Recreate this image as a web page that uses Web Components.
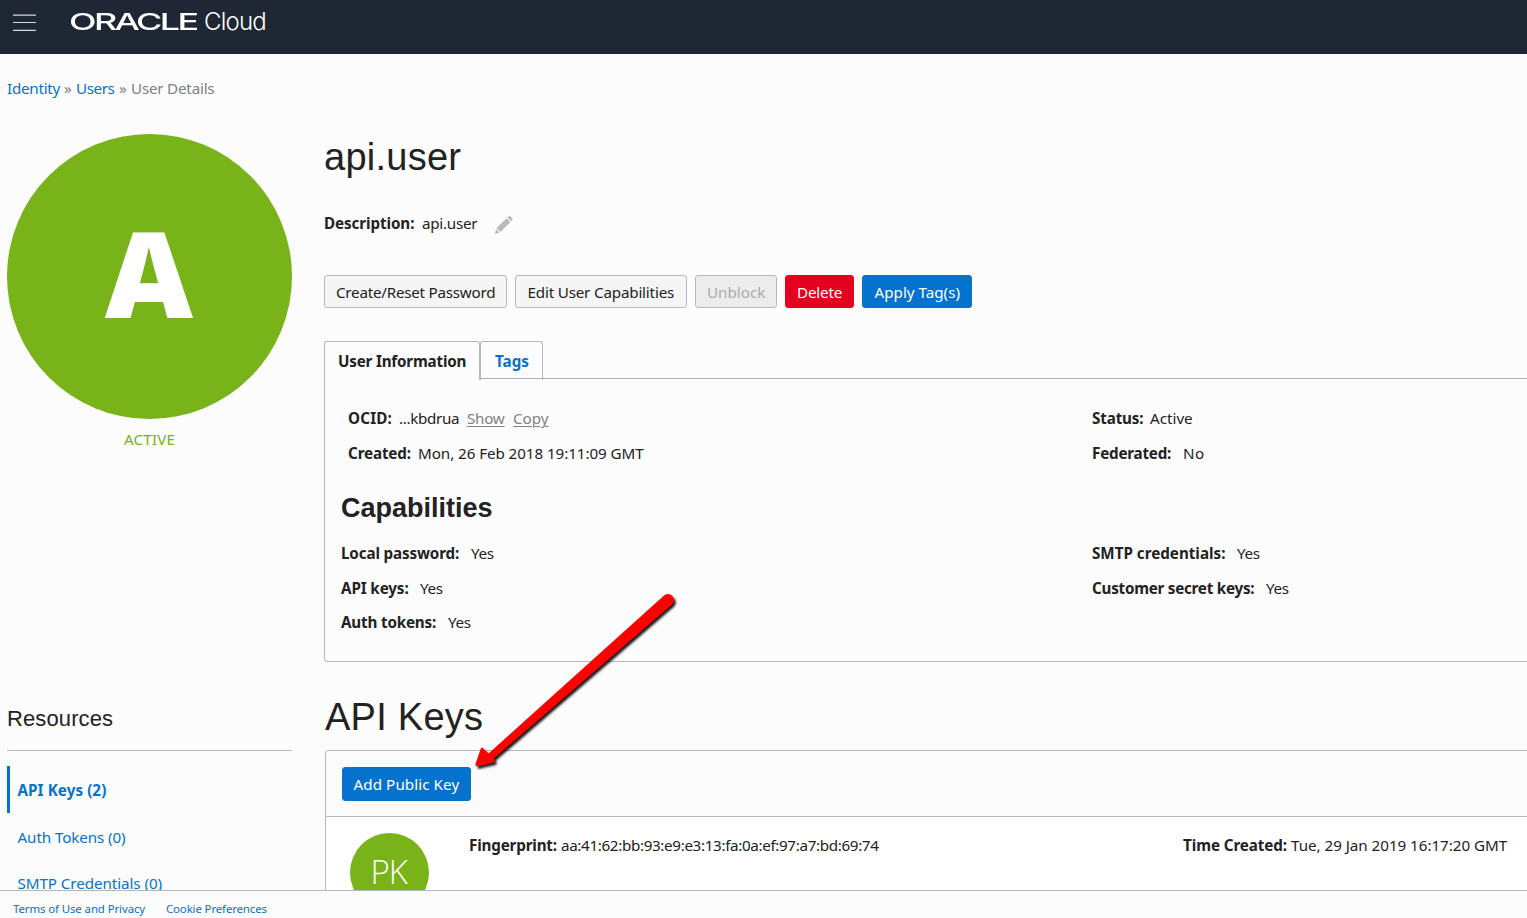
<!DOCTYPE html>
<html lang="en">
<head>
<meta charset="utf-8">
<title>User Details</title>
<style>
html,body{margin:0;height:100%;overflow:hidden;background:#fcfcfc}
body{font:15.2px/20px "Noto Sans","Open Sans",sans-serif;color:#222}
</style>
</head>
<body>
<console-app></console-app>
<script>
class Base extends HTMLElement{
  connectedCallback(){
    if(this.shadowRoot)return;
    const root=this.attachShadow({mode:'open'});
    const t=document.createElement('template');
    t.innerHTML=this.render();
    root.appendChild(t.content.cloneNode(true));
  }
  attr(n,d=''){return this.getAttribute(n)??d}
}

/* Product bar */
class ConsoleHeader extends Base{
  render(){return `<style>
:host{display:flex;height:54px;flex:none;background:#1e2733;color:#fff;box-sizing:border-box;padding-left:13px}
.menu{margin-top:14px;width:23px;height:18px;flex:none;display:block}
.brand{display:flex;align-items:flex-start;margin:8px 0 0 33px;height:28px;line-height:28px}
.word{width:128px;margin-right:7px;flex:none}
.word ui-text{font:500 23px/28px "Inter",sans-serif;transform-origin:0 0;transform:scaleX(1.56)}
.cloud{font:300 24px/28px "Inter",sans-serif}
</style>
<svg class="menu" viewBox="0 0 23 18"><path d="M0 1.2H23M0 8.5H23M0 16.3H23" stroke="#d7d9dc" stroke-width="1.2"/></svg>
<div class="brand"><span class="word"><ui-text w="82">ORACLE</ui-text></span><ui-text class="cloud" w="62">Cloud</ui-text></div>`}
}

/* Trail of links above the page title */
class BreadCrumb extends Base{
  render(){return `<style>
:host{display:flex;height:20px;gap:4px;color:#7d7f82}
.l{color:#0572ce}
</style><ui-text class="l" w="53">Identity</ui-text><ui-text w="8">»</ui-text><ui-text class="l" w="39">Users</ui-text><ui-text w="8">»</ui-text><ui-text w="83.5">User Details</ui-text>`}
}

class UiButton extends Base{
  render(){return `<style>
:host{display:flex;align-items:center;justify-content:center;box-sizing:border-box;height:33px;border:1px solid #b3b9c3;border-radius:3px;background:#f5f5f5;flex:none;width:${this.attr('width')}px}
:host([kind=disabled]){background:#ececec;color:#a9abae}
:host([kind=danger]){background:#e6001f;border-color:#e6001f;color:#fff}
:host([kind=primary]){background:#0572ce;border-color:#0572ce;color:#fff}
</style><slot></slot>`}
}

/* Label and value pair */
class UiField extends Base{
  render(){return `<style>
:host{display:flex;height:20px;white-space:nowrap}
.k{font-weight:700;margin-right:${this.attr('gap','8')}px}
</style><ui-text class="k" w="${this.attr('kw')}">${this.attr('label')}</ui-text><ui-text w="${this.attr('vw')}">${this.attr('value')}</ui-text><slot></slot>`}
}

class UiAvatar extends Base{
  render(){const s=this.attr('size');return `<style>
:host{display:flex;align-items:center;justify-content:center;flex:none;width:${s}px;height:${s}px;border-radius:50%;background:#78b319;color:#fff}
</style><slot></slot>`}
}

class UserTabs extends Base{
  render(){return `<style>
:host{display:flex;height:37px;flex:none}
div{box-sizing:border-box;border:1px solid #b3b9c3;border-bottom:0;border-radius:3px 3px 0 0;font-weight:700;height:39px;padding:9px 0 0 13px;position:relative;z-index:1}
.on{width:156px;background:#fcfcfc}
.off{width:63px;padding-left:14px;color:#0572ce}
</style><div class="on"><ui-text w="128">User Information</ui-text></div><div class="off"><ui-text w="34">Tags</ui-text></div>`}
}

class UserInfo extends Base{
  render(){return `<style>
:host{display:block;box-sizing:border-box;height:284px;flex:none;border:1px solid #b3b9c3;border-top-color:#aab0b5;border-right:0;border-radius:0 0 0 4px;padding:29px 0 0 16px}
.grid{display:grid;grid-template-columns:751px 1fr;row-gap:15px}
.top ui-field:nth-child(odd){margin-left:7px}
.caps{row-gap:14.5px}
h2{font:700 27px/34px "Liberation Sans",sans-serif;margin:28px 0 18px;height:34px}
.link{color:#7f8285;margin-left:8px;text-decoration:underline 1px;text-underline-offset:2px}
</style>
<div class="grid top">
<ui-field label="OCID:" kw="44" value="...kbdrua" vw="60" gap="7"><ui-text class="link" w="38">Show</ui-text><ui-text class="link" w="36">Copy</ui-text></ui-field>
<ui-field label="Status:" kw="51" value="Active" vw="43" gap="7"></ui-field>
<ui-field label="Created:" kw="63" value="Mon, 26 Feb 2018 19:11:09 GMT" vw="226" gap="7"></ui-field>
<ui-field label="Federated:" kw="79" value="No" vw="22" gap="12"></ui-field>
</div>
<h2><ui-text w="152">Capabilities</ui-text></h2>
<div class="grid caps">
<ui-field label="Local password:" kw="118" value="Yes" vw="23" gap="12"></ui-field>
<ui-field label="SMTP credentials:" kw="133" value="Yes" vw="23" gap="12"></ui-field>
<ui-field label="API keys:" kw="68" value="Yes" vw="23" gap="11"></ui-field>
<ui-field label="Customer secret keys:" kw="162" value="Yes" vw="23" gap="12"></ui-field>
<ui-field label="Auth tokens:" kw="95" value="Yes" vw="23" gap="12"></ui-field>
</div>`}
}

class ApiKeys extends Base{
  render(){return `<style>
:host{display:block;margin-left:1px;border:1px solid #b3b9c3;border-right:0;border-radius:4px 0 0 0;height:200px;box-sizing:border-box}
.bar{box-sizing:border-box;padding:16px;border-bottom:1px solid #b3b9c3;height:66px;background:#fbfbfb;border-radius:3px 0 0 0}
.row{display:flex;background:#fff;height:133px;padding:16px 0 0 24px;box-sizing:border-box}
.pk{font:300 33px/40px "Open Sans",sans-serif;margin:-2px 2px 0 0}
.fp{margin:2px 0 0 40px;width:714px;flex:none}
.tc{margin-top:2px}
</style>
<div class="bar"><ui-button kind="primary" width="129" style="height:34px"><ui-text w="106">Add Public Key</ui-text></ui-button></div>
<div class="row"><ui-avatar size="79"><ui-text class="pk" w="36">PK</ui-text></ui-avatar>
<ui-field class="fp" label="Fingerprint:" kw="88" value="aa:41:62:bb:93:e9:e3:13:fa:0a:ef:97:a7:bd:69:74" vw="318" gap="4"></ui-field>
<ui-field class="tc" label="Time Created:" kw="104" value="Tue, 29 Jan 2019 16:17:20 GMT" vw="216" gap="4"></ui-field></div>`}
}

class SideBar extends Base{
  render(){return `<style>
:host{display:flex;flex-direction:column;width:285px;flex:none}
.a{font:800 118px/160px "Open Sans",sans-serif;margin:-8px 2px 0 0;transform:scaleX(1.03)}
.st{color:#78b319;align-self:center;margin-top:10px}
h3{font:400 22px/28px "Liberation Sans",sans-serif;margin:256px 0 0;height:46px;box-sizing:border-box;border-bottom:1px solid #b3b9c3}
nav{margin-top:15px;color:#0572ce}
nav div{height:46.6px;box-sizing:border-box;padding:14px 0 0 10.5px}
nav .on{border-left:3px solid #0572ce;padding-left:7.5px;font-weight:700}
</style>
<ui-avatar size="285"><ui-text class="a">A</ui-text></ui-avatar>
<ui-text class="st" w="51">ACTIVE</ui-text>
<h3><ui-text w="106">Resources</ui-text></h3>
<nav><div class="on"><ui-text w="89">API Keys (2)</ui-text></div><div><ui-text w="108.5">Auth Tokens (0)</ui-text></div><div><ui-text w="144.5">SMTP Credentials (0)</ui-text></div></nav>`}
}

class UserDetail extends Base{
  render(){return `<style>
:host{display:flex;flex-direction:column;flex:1;min-width:0}
h1{font:400 38px/46px "Liberation Sans",sans-serif;margin:0;height:46px}
.desc{margin:33px 0 0;height:20px}
.desc svg{width:18px;height:18px;margin:3px 0 0 18px}
.acts{display:flex;gap:8px;margin:42px 0 33px}
.k{margin:32px 0 10px 1px}
</style>
<h1><ui-text w="137">api.user</ui-text></h1>
<ui-field class="desc" label="Description:" kw="90" value="api.user" vw="55" gap="8"><svg viewBox="0 0 18 18" fill="#b3bac2"><path d="M12.3 1.7L13.9.3Q14.6-.2 15.3.4L17.4 2.5Q18 3.1 17.4 3.8L16.1 5.2ZM11.5 2.4L15.4 6L5.3 16L1.4 12.1ZM1 13L4.6 16.7L.6 17.8Q0 17.8.1 17.2Z"/></svg></ui-field>
<div class="acts"><ui-button width="183"><ui-text w="159">Create/Reset Password</ui-text></ui-button><ui-button width="172"><ui-text w="147">Edit User Capabilities</ui-text></ui-button><ui-button width="82" kind="disabled"><ui-text w="58">Unblock</ui-text></ui-button><ui-button width="69" kind="danger"><ui-text w="45">Delete</ui-text></ui-button><ui-button width="110" kind="primary"><ui-text w="85">Apply Tag(s)</ui-text></ui-button></div>
<user-tabs></user-tabs><user-info></user-info>
<h1 class="k"><ui-text w="158">API Keys</ui-text></h1>
<api-keys></api-keys>`}
}

/* Pointer drawn above the page */
class CalloutArrow extends Base{
  render(){return `<style>
:host{position:absolute;left:465px;top:584.5px;width:225px;height:195px;pointer-events:none;z-index:5}
svg{display:block;overflow:visible}
</style><svg width="225" height="195" viewBox="465 585 225 195"><defs><filter id="s" x="-10%" y="-10%" width="125%" height="125%"><feDropShadow dx="2" dy="2.5" stdDeviation="1.3" flood-color="#000" flood-opacity=".9"/></filter></defs>
<path filter="url(#s)" fill="#f00" d="M664.3 595.3Q668.5 592.3 672.3 596Q675.6 600.2 672 604.2L493.7 758.3L494.8 760.6Q495 762.2 493.2 762.5L477.3 766.2Q474.9 766.2 475.6 763.7L480.7 748.7Q481.7 746.6 483.3 748.5L488.5 753.6Z"/></svg>`}
}

class ConsoleFooter extends Base{
  render(){return `<style>
:host{display:flex;height:28px;box-sizing:border-box;flex:none;border-top:1px solid #b3b9c3;background:#fbfbfb;padding:8px 0 0 13px;gap:21px;color:#0572ce;font-size:11.4px;line-height:20px;position:relative}
</style><ui-text w="132">Terms of Use and Privacy</ui-text><ui-text w="101">Cookie Preferences</ui-text>`}
}

class ConsoleApp extends Base{
  render(){return `<style>
:host{display:flex;flex-direction:column;width:100vw;height:918px;overflow:hidden;position:relative}
main{flex:1;min-height:0;overflow:hidden;padding:24px 0 0 7px}
.cols{display:flex;gap:32px;margin-top:36px}
</style><console-header></console-header>
<main><bread-crumb></bread-crumb><div class="cols"><side-bar></side-bar><user-detail></user-detail></div></main>
<console-footer></console-footer><callout-arrow></callout-arrow>`}
}

/* Single line of text tracked so that it fills the width given in w */
class UiText extends HTMLElement{
  connectedCallback(){
    if(!this.shadowRoot)this.attachShadow({mode:'open'}).innerHTML='<style>:host{display:block;white-space:pre;flex:none;width:max-content}</style><slot></slot>';
    const w=parseFloat(this.getAttribute('w'));
    if(!w)return;
    const n=this.textContent.length;
    this.style.letterSpacing=((w-this.offsetWidth)/n).toFixed(3)+'px';
    this.style.width=w+'px';
  }
}

customElements.define('console-app',ConsoleApp);
customElements.define('console-header',ConsoleHeader);
customElements.define('side-bar',SideBar);
customElements.define('user-detail',UserDetail);
customElements.define('bread-crumb',BreadCrumb);
customElements.define('user-tabs',UserTabs);
customElements.define('user-info',UserInfo);
customElements.define('api-keys',ApiKeys);
customElements.define('console-footer',ConsoleFooter);
customElements.define('callout-arrow',CalloutArrow);
customElements.define('ui-avatar',UiAvatar);
customElements.define('ui-button',UiButton);
customElements.define('ui-field',UiField);
customElements.define('ui-text',UiText);
</script>
</body>
</html>
